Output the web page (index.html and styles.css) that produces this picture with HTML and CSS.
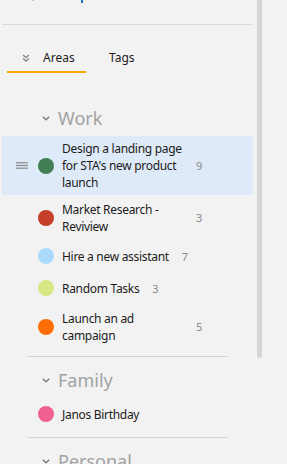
FILE: index.html
```html
<!DOCTYPE html>
<html>
<head>
<meta charset="utf-8">
<link rel="stylesheet" href="styles.css">
</head>
<body>
<div class="panel">
  <div class="top">
    <span class="frag frag-green"></span>
    <span class="frag frag-blue"></span>
  </div>
  <div class="rule"></div>

  <div class="tabs">
    <div class="tab active">
      <svg class="tab-icon" width="8" height="8" viewBox="0 0 8 8"><polyline points="1,1 4,3.5 7,1" fill="none" stroke="#8a8a8a" stroke-width="1.4"/><polyline points="1,4.5 4,7 7,4.5" fill="none" stroke="#8a8a8a" stroke-width="1.4"/></svg>
      <span>Areas</span>
    </div>
    <div class="tab">
      <span>Tags</span>
    </div>
  </div>

  <div class="section-head first">
    <svg class="chev" width="8" height="5" viewBox="0 0 8 5"><polyline points="0.8,0.8 4,3.8 7.2,0.8" fill="none" stroke="#7a7a7a" stroke-width="1.3"/></svg>
    <span>Work</span>
  </div>

  <div class="row selected">
    <svg class="handle" width="12" height="7" viewBox="0 0 12 7"><line x1="0" y1="0.8" x2="12" y2="0.8" stroke="#8a8a8a" stroke-width="1.2"/><line x1="0" y1="3.5" x2="12" y2="3.5" stroke="#8a8a8a" stroke-width="1.2"/><line x1="0" y1="6.2" x2="12" y2="6.2" stroke="#8a8a8a" stroke-width="1.2"/></svg>
    <span class="dot green"></span>
    <span class="label">Design a landing page for STA's new product launch</span>
    <span class="count">9</span>
  </div>
  <div class="row">
    <span class="handle"></span>
    <span class="dot red"></span>
    <span class="label">Market Research - Reviview</span>
    <span class="count">3</span>
  </div>
  <div class="row">
    <span class="handle"></span>
    <span class="dot sky"></span>
    <span class="label">Hire a new assistant</span>
    <span class="count">7</span>
  </div>
  <div class="row">
    <span class="handle"></span>
    <span class="dot lime"></span>
    <span class="label">Random Tasks</span>
    <span class="count">3</span>
  </div>
  <div class="row">
    <span class="handle"></span>
    <span class="dot orange"></span>
    <span class="label">Launch an ad campaign</span>
    <span class="count">5</span>
  </div>

  <div class="divider"></div>

  <div class="section-head">
    <svg class="chev" width="8" height="5" viewBox="0 0 8 5"><polyline points="0.8,0.8 4,3.8 7.2,0.8" fill="none" stroke="#7a7a7a" stroke-width="1.3"/></svg>
    <span>Family</span>
  </div>
  <div class="row">
    <span class="handle"></span>
    <span class="dot pink"></span>
    <span class="label">Janos Birthday</span>
  </div>

  <div class="divider"></div>

  <div class="section-head">
    <svg class="chev" width="8" height="5" viewBox="0 0 8 5"><polyline points="0.8,0.8 4,3.8 7.2,0.8" fill="none" stroke="#7a7a7a" stroke-width="1.3"/></svg>
    <span>Personal</span>
  </div>
</div>
<div class="scrollbar"></div>
</body>
</html>
```

FILE: styles.css
```css
html, body {
  margin: 0;
  padding: 0;
}
body {
  background: #f2f2f2;
  font-family: "Noto Sans", "Open Sans", sans-serif;
  color: #1b1b1b;
  display: flex;
  align-items: flex-start;
  height: 464px;
  overflow: hidden;
}
.panel {
  width: 251px;
  padding: 0 2px;
  flex: none;
}
.top {
  height: 24px;
  display: flex;
  align-items: flex-start;
}
.frag {
  display: block;
}
.frag-green {
  width: 2px;
  height: 1px;
  background: #a8d6ab;
  margin-left: 30px;
}
.frag-blue {
  width: 2px;
  height: 3px;
  background: #1f6cbf;
  margin-left: 47px;
}
.rule {
  height: 1px;
  background: #d9d9d9;
}
.tabs {
  display: flex;
  margin-top: 19px;
  margin-left: 5px;
  font-size: 12px;
  line-height: 17px;
}
.tab {
  display: flex;
  align-items: center;
  padding: 5px 0;
  border-bottom: 2px solid transparent;
}
.tab.active {
  width: 64px;
  padding-left: 15px;
  border-bottom-color: #f7a700;
}
.tab-icon {
  margin-right: 13px;
}
.tab + .tab {
  margin-left: 23px;
}
.section-head {
  display: flex;
  align-items: center;
  padding-left: 40px;
  height: 24px;
  font-size: 18px;
  line-height: 24px;
  color: #a2a2a2;
  margin-top: 11px;
  margin-bottom: 6px;
}
.section-head.first {
  margin-top: 33px;
}
.chev {
  margin-right: 8px;
  margin-top: 1px;
}
.row {
  display: flex;
  align-items: center;
  min-height: 32px;
  box-sizing: border-box;
  padding: 5.5px 0 5.5px 14px;
  font-size: 12px;
  line-height: 17px;
}
.row.selected {
  background: #dfeaf8;
  padding-top: 4px;
  padding-bottom: 4px;
}
.handle {
  width: 12px;
  flex: none;
  margin-right: 10px;
}
.dot {
  width: 16px;
  height: 16px;
  border-radius: 50%;
  flex: none;
  margin-right: 8px;
}
.green { background: #427e54; }
.red { background: #c63f29; }
.sky { background: #a9dafc; }
.lime { background: #d8e784; }
.orange { background: #fd6e09; }
.pink { background: #ef6290; }
.label {
  max-width: 121px;
  letter-spacing: -0.3px;
}
.count {
  margin-left: 13px;
  font-size: 11px;
  color: #8a8a8a;
}
.divider {
  height: 1px;
  background: #d5d5d5;
  margin: 7px 25px 0;
}
.scrollbar {
  flex: none;
  width: 5px;
  height: 358px;
  margin-left: 2px;
  background: #d6d6d6;
  border-radius: 0 0 2px 2px;
}
```
